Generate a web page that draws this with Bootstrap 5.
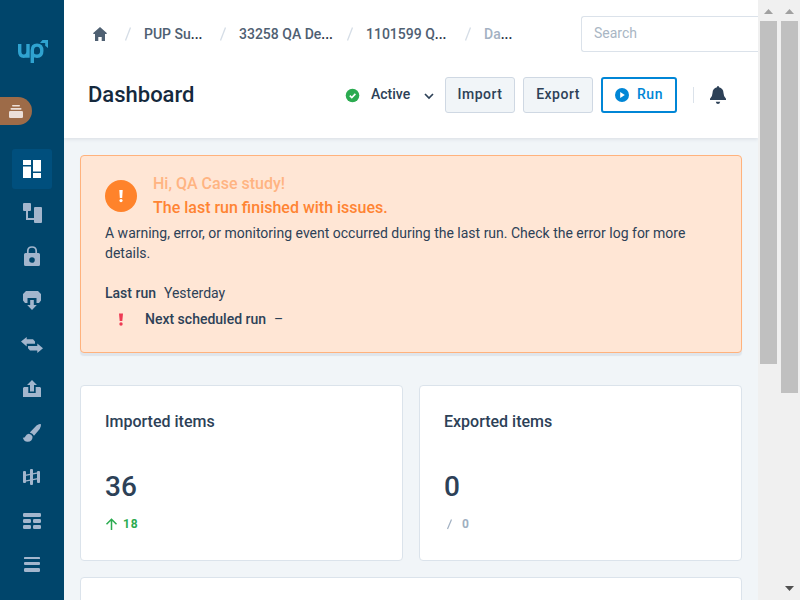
<!DOCTYPE html>
<html lang="en">
<head>
<meta charset="utf-8">
<meta name="viewport" content="width=device-width, initial-scale=1">
<title>Dashboard</title>
<link href="https://cdn.jsdelivr.net/npm/bootstrap@5.3.0/dist/css/bootstrap.min.css" rel="stylesheet">
<style>
body{font-family:Roboto,"Liberation Sans",sans-serif;font-size:14px;line-height:20px;color:#2d4157;background:#f1f5f8;height:100vh}
svg{display:block;flex:none}
.side{width:64px;background:#00456b;padding-top:38px}
.brand{margin-left:18px;height:27px}
.stack-tab{width:32px;height:28px;margin-top:32px;background:#9d6b48;border-radius:0 14px 14px 0}
.menu{gap:4px;margin-top:24px}
.menu a{width:40px;height:40px;border-radius:3px;color:#a3b6cd}
.menu a.active{background:#004f7d;color:#fff}
.topbar{height:138px;background:#fff;box-shadow:0 1px 4px rgba(45,65,87,.13)}
.crumbs{height:36px;padding-left:28px;margin-top:16px;color:#4f6072;white-space:nowrap;font-weight:500}
.crumbs i{font-style:normal;color:#1f3043}
.crumbs .now{color:#a3b1c2}
.crumb-a{width:58px}
.crumb-b{width:93px}
.crumb-c{width:81px}
.search{width:177px;height:36px;border:1px solid #dbe2ea;border-right:0;border-radius:3px 0 0 3px;padding:6px 12px;color:#a9b6c4;background:#fff;font-weight:400}
.titlebar{height:36px;padding-left:24px;margin-top:25px}
.titlebar h1{font-size:22px;line-height:28px;color:#15293d;width:257px;font-weight:500}
.state{width:100px;font-weight:500}
.state-name{padding:0 0 4px 11px;margin-bottom:-2px}
.state-caret{margin-right:10px}
.tool{width:70px;height:36px;border:1px solid #cfd8e3;border-radius:3px;background:#f1f5f8;color:#2d4157;font-size:14px;font-weight:500;letter-spacing:.5px;line-height:20px;padding:0 0 2px}
.tool.run{width:76px;background:#fff;border:2px solid #0086d6;color:#0086d6}
.tool.run svg{margin-top:2px}
.notice{margin:17px 16px 0;height:198px;border:1px solid #ffb27d;border-radius:4px;background:#ffe6d5;padding:16px 24px;box-shadow:0 3px 1px #dfe5ec}
.notice p{padding-top:3px}
.notice b{font-weight:500}
.next-run{margin-top:-2px}
.bang{width:32px;height:32px;background:#ff832b}
.greet{font-size:16px;line-height:24px;font-weight:500;color:#ff8433}
.greet .soft{color:#ffb482}
.stats{margin:32px 16px 0;gap:16px}
.panel{border:1px solid #dbe3eb;border-radius:4px;background:#fff}
.stat{height:176px;padding:24px}
.stat h2{font-size:16px;line-height:24px;font-weight:500}
.figure-num{font-size:28px;line-height:32px;margin-top:37px;font-weight:500}
.delta{font-size:12px;line-height:16px;margin-top:13px;font-weight:700;letter-spacing:.9px;color:#a0afc1}
.delta.up{color:#2bab50}
.more{height:100px}
.rail{width:42px;background:#f0f0f0;padding:0 2px;gap:4px}
.rail > div{width:17px}
.thumb{background:#c0c0c0}
</style>
<script src="https://cdn.jsdelivr.net/npm/bootstrap@5.3.0/dist/js/bootstrap.bundle.min.js"></script>
</head>
<body class="d-flex overflow-hidden">
<nav class="side flex-shrink-0">
  <div class="brand"><svg width="31" height="27" viewBox="0 0 31 27" fill="none" stroke="#2fa3d0" stroke-width="3.400"><path d="M1.700 6v7.500q0 4.700 4 4.700 4.300 0 4.300-4.700V6v13.800M14.300 25V12.500q0-5.400 4.700-5.400 4.800 0 4.800 5.600 0 5.500-4.800 5.500-2.700 0-4.500-1.800"/><path d="M24.500 2H30v8l-2.800-2.200V5H22z" fill="#2fa3d0" stroke="none"/></svg></div>
  <div class="stack-tab"><svg width="32" height="28" viewBox="0 0 32 28" fill="#ecdfd8"><rect x="12" y="8" width="8" height="1.600" rx=".8"/><rect x="10.500" y="11" width="11" height="1.700" rx=".8"/><rect x="9" y="14" width="14" height="7" rx="1.300"/></svg></div>
  <div class="menu d-flex flex-column align-items-center">
    <a class="active d-flex align-items-center justify-content-center"><svg width="24" height="24" fill="currentColor"><path d="M3 3h8v5H3zM3 9.500h8V21H3zM13 3h8v11.500h-8zM13 16h8v5h-8z"/></svg></a>
    <a class="d-flex align-items-center justify-content-center"><svg width="24" height="24" fill="currentColor"><rect x="3" y="2" width="8" height="8" rx="1"/><rect x="14" y="6" width="8" height="16" rx="1"/><path d="M7 9v9h8" fill="none" stroke="currentColor" stroke-width="2"/></svg></a>
    <a class="d-flex align-items-center justify-content-center"><svg width="24" height="24" fill="currentColor"><path d="M5.500 8H18.500Q20 8 20 9.500V19.500Q20 21 18.500 21H5.500Q4 21 4 19.500V9.500Q4 8 5.500 8zM12 12.200a2.800 2.800 0 1 0 0 5.600 2.800 2.800 0 0 0 0-5.600z" fill-rule="evenodd"/><path d="M7.800 9V6q0-4 4.200-4t4.200 4v3" fill="none" stroke="currentColor" stroke-width="1.700"/></svg></a>
    <a class="d-flex align-items-center justify-content-center"><svg width="24" height="24" fill="currentColor"><path d="M6 2h12l3 3v6.500L19 14h-2.500V9h-9v5H5l-2-2.500V5z"/><path d="M10.200 11h3.600v5h3L12 21l-4.800-5h3z"/></svg></a>
    <a class="d-flex align-items-center justify-content-center"><svg width="24" height="24" fill="currentColor"><path d="M1 8.600 6.700 4v2.300H13l2 2.200v2.300H6.700v2.800zM23 15.300 17.300 20v-2.500H10l-2-2.200v-2.200h9.300V10.500z"/></svg></a>
    <a class="d-flex align-items-center justify-content-center"><svg width="24" height="24" fill="currentColor"><path d="M12 3l5 5h-3v6.500h-4V8H7z"/><path d="M4 10h4.300v6h7.400v-6H20l1 1v9H3v-9z"/></svg></a>
    <a class="d-flex align-items-center justify-content-center"><svg width="24" height="24" fill="currentColor"><path d="M9.800 11.500 16.500 4.600Q19 2.400 20.800 3.100 21.600 5.500 19.700 8L14 14.800Q12.800 12.200 9.800 11.500z"/><path d="M8.800 12.700q3 .3 3.800 3-.2 4.900-5 5.100-3.800 0-4.800-4.200 2 .6 2.800-1.500.9-2.300 3.200-2.400z"/></svg></a>
    <a class="d-flex align-items-center justify-content-center"><svg width="24" height="24" fill="currentColor"><rect x="3" y="6" width="3" height="12" rx="1"/><rect x="10" y="4" width="3" height="16" rx="1"/><rect x="17" y="6" width="3" height="12" rx="1"/><path d="M5 10.400 18 7.800M5 16.200l13-2.600" stroke="currentColor" stroke-width="1.300"/></svg></a>
    <a class="d-flex align-items-center justify-content-center"><svg width="24" height="24" fill="currentColor"><rect x="3" y="4" width="18" height="4" rx="1.300"/><rect x="3" y="10" width="8" height="4" rx="1.300"/><rect x="13" y="10" width="8" height="4" rx="1.300"/><rect x="3" y="16" width="8" height="4" rx="1.300"/><rect x="13" y="16" width="8" height="4" rx="1.300"/></svg></a>
    <a class="d-flex align-items-center justify-content-center"><svg width="24" height="24" fill="currentColor"><rect x="4" y="4" width="16" height="2" rx=".6"/><rect x="4" y="9" width="16" height="3" rx="1"/><rect x="4" y="15" width="16" height="4" rx="1.300"/></svg></a>
  </div>
</nav>
<main class="flex-grow-1 overflow-hidden">
  <header class="topbar d-flex flex-column">
    <div class="crumbs d-flex align-items-center">
      <svg width="16" height="16" fill="#4f6072"><path d="M8 1l7 6.200-.7.900H13V15H9.700v-4H6.300v4H3V8.100H1.700L1 7.200z"/></svg>
      <svg width="36" height="16" stroke="#d5dde6" stroke-width="1.300"><path d="M17.500 14.500l5-13"/></svg>
      <span class="crumb-a">PUP Su<i>...</i></span>
      <svg width="37" height="16" stroke="#d5dde6" stroke-width="1.300"><path d="M18.500 14.500l5-13"/></svg>
      <span class="crumb-b">33258 QA De<i>...</i></span>
      <svg width="34" height="16" stroke="#d5dde6" stroke-width="1.300"><path d="M15.500 14.500l5-13"/></svg>
      <span class="crumb-c">1101599 Q<i>...</i></span>
      <svg width="37" height="16" stroke="#d5dde6" stroke-width="1.300"><path d="M18.500 14.500l5-13"/></svg>
      <span class="now">Da<i>...</i></span>
      <div class="search ms-auto">Search</div>
    </div>
    <div class="titlebar d-flex align-items-center">
      <h1 class="m-0">Dashboard</h1>
      <div class="state d-flex align-items-center">
        <svg width="15" height="15"><circle cx="7.500" cy="7.500" r="6.800" fill="#2bab50"/><path d="M4.800 7.600l2 2 3.600-3.700" fill="none" stroke="#fff" stroke-width="1.600"/></svg>
        <span class="state-name flex-grow-1">Active</span>
        <svg width="12" height="12" class="state-caret" fill="none" stroke="#2d4157" stroke-width="1.700"><path d="M2 5l4 4 4-4"/></svg>
      </div>
      <button class="tool btn">Import</button>
      <button class="tool btn ms-2">Export</button>
      <button class="tool run btn ms-2 d-flex align-items-center justify-content-center gap-2"><svg width="14" height="14"><circle cx="7" cy="7" r="7" fill="#0086d6"/><path d="M5.200 4l4.600 3-4.600 3z" fill="#fff"/></svg>Run</button>
      <svg width="33" height="20"><path d="M16.500 2v16" stroke="#dbe2ea"/></svg>
      <svg width="16" height="18" viewBox="0 0 16 18" fill="#2d4157"><path d="M7 1.300Q7 0 8 0t1 1.300q4.300.9 4.500 5.700.1 4 2.500 5.800V14H0v-1.200Q2.400 11 2.500 7 2.700 2.200 7 1.300zM5.800 15.700h4.400Q9.800 18 8 18t-2.200-2.300z"/></svg>
    </div>
  </header>
  <section class="notice">
    <div class="d-flex align-items-center">
      <div class="bang rounded-circle d-flex align-items-center justify-content-center me-3"><svg width="6" height="14" fill="#fff"><path d="M1.300 1h3.400l-.5 8H1.800z"/><circle cx="3" cy="11.600" r="1.600"/></svg></div>
      <div class="greet"><div class="soft">Hi, QA Case study!</div><div>The last run finished with issues.</div></div>
    </div>
    <p class="m-0 pe-4">A warning, error, or monitoring event occurred during the last run. Check the error log for more details.</p>
    <div class="d-flex gap-2 mt-3 pt-1"><b>Last run</b><span>Yesterday</span></div>
    <div class="next-run d-flex align-items-center pt-2"><svg width="40" height="14" fill="#ee3a54"><path d="M14 1.500h4l-.7 7.500h-2.600z"/><circle cx="16" cy="12" r="1.700"/></svg><b>Next scheduled run</b><span class="ms-2">–</span></div>
  </section>
  <section class="stats d-flex">
    <article class="panel stat flex-fill w-50">
      <h2 class="m-0">Imported items</h2>
      <div class="figure-num">36</div>
      <div class="delta up d-flex align-items-center"><svg width="18" height="14" fill="none" stroke="currentColor" stroke-width="1.500"><path d="M6.500 13V2.500M1.500 7.300l5-5 5 5"/></svg>18</div>
    </article>
    <article class="panel stat flex-fill w-50">
      <h2 class="m-0">Exported items</h2>
      <div class="figure-num">0</div>
      <div class="delta d-flex align-items-center"><svg width="18" height="14" stroke="currentColor" stroke-width="1.200"><path d="M3.500 12l4-9.500"/></svg>0</div>
    </article>
  </section>
  <section class="panel more mx-3 mt-3"></section>
</main>
<aside class="rail d-flex flex-shrink-0">
  <div><svg width="17" height="21" fill="#a0a0a0"><path d="M4 14l4.500-5 4.500 5z"/></svg><div class="thumb" style="height:343px"></div></div>
  <div class="d-flex flex-column"><svg width="17" height="21" fill="#a0a0a0"><path d="M4 14l4.500-5 4.500 5z"/></svg><div class="thumb" style="height:372px"></div><svg class="mt-auto" width="17" height="17" fill="#505050"><path d="M4 3h9L8.500 8z"/></svg></div>
</aside>
</body>
</html>
